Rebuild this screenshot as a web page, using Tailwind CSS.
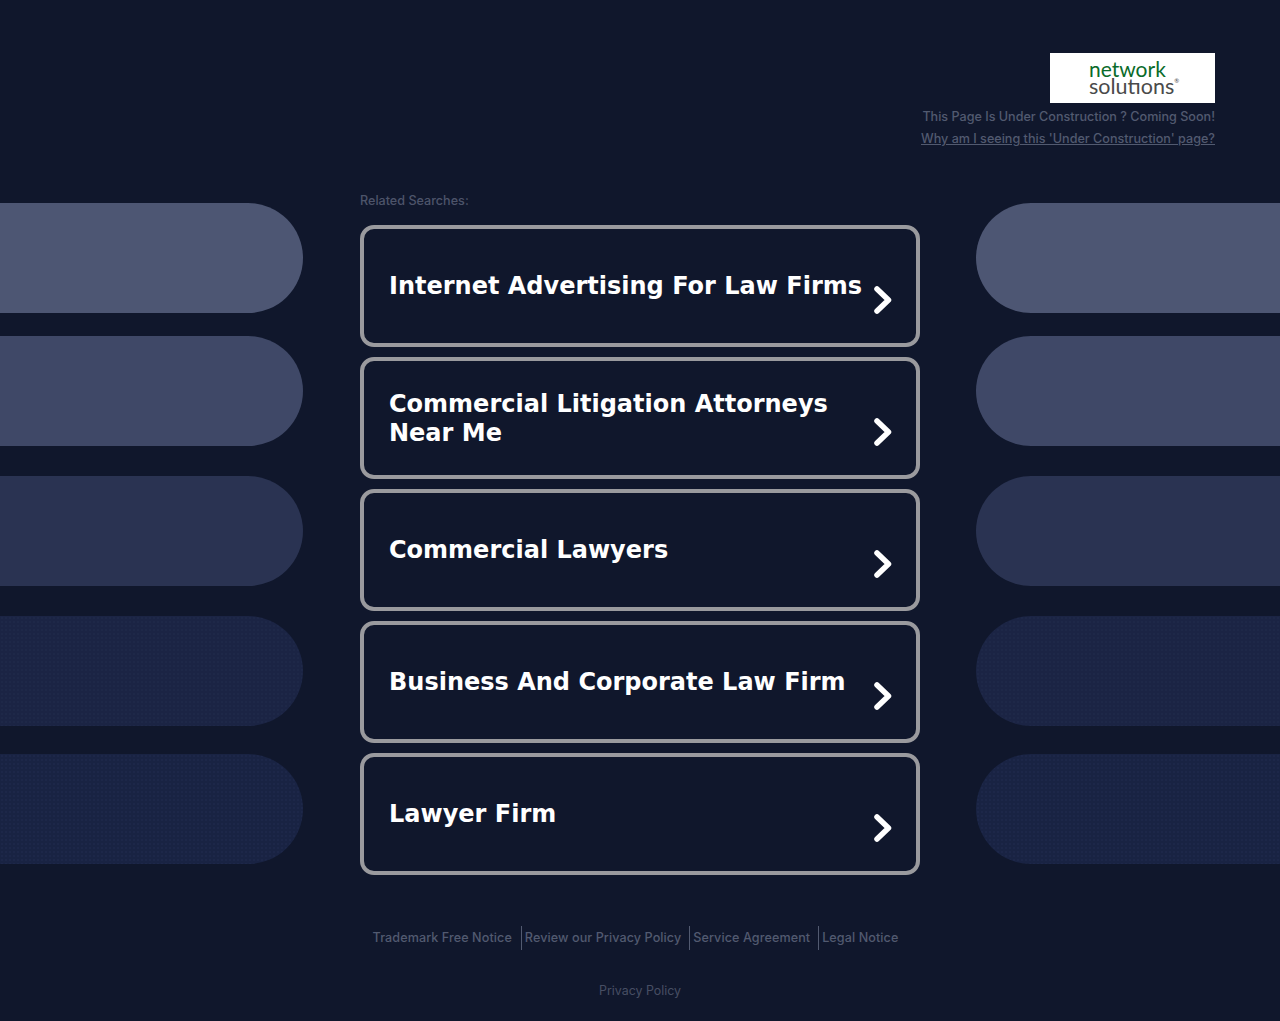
<!DOCTYPE html>
<html lang="en">
<head>
    <meta charset="UTF-8">
    <meta name="viewport" content="width=device-width, initial-scale=1.0">
    <title>Under Construction</title>
    <script src="https://cdn.jsdelivr.net/npm/@tailwindcss/browser@4"></script>
</head>
<body class="bg-[#10172c] h-[1021px] overflow-hidden font-['Inter',sans-serif]">
    <!-- Top right logo -->
    <header class="h-[203px] pt-[53px] pr-[65px] flex flex-col items-end">
        <div class="w-[165px] h-[50px] bg-white flex flex-col items-start pl-[39px] pt-[7px] font-['Lato',sans-serif] text-[21.5px] leading-[17px]">
            <span class="block h-[18px] text-[#0a6b2a] text-[21px]">network</span>
            <span class="block h-[17px] text-[#4a4a4a]">solutıons<span class="text-[6px] leading-none align-top">®</span></span>
        </div>
        <p class="mt-[6px] text-[12.6px] leading-[16px] font-medium text-[#525a70]">This Page Is Under Construction ? Coming Soon!</p>
        <a href="#" class="mt-[6px] text-[12.6px] leading-[16px] font-medium text-[#525a70] underline">Why am I seeing this 'Under Construction' page?</a>
    </header>

    <main class="flex items-start">
        <!-- Left pills -->
        <div class="w-[303px] shrink-0 flex flex-col">
            <div class="h-[110px] rounded-r-[55px] bg-[#4d5673]"></div>
            <div class="h-[110px] mt-[23px] rounded-r-[55px] bg-[#3f4867]"></div>
            <div class="h-[110px] mt-[30px] rounded-r-[55px] bg-[#2a3352]"></div>
            <div class="h-[110px] mt-[30px] rounded-r-[55px] bg-[#1b2444] bg-[radial-gradient(circle,#1e2848_1px,transparent_1px)] bg-[length:4px_4px]"></div>
            <div class="h-[110px] mt-[28px] rounded-r-[55px] bg-[#192343] bg-[radial-gradient(circle,#1d2749_1px,transparent_1px)] bg-[length:4px_4px]"></div>
        </div>

        <!-- Results -->
        <div class="w-[560px] shrink-0 ml-[57px] -mt-[10px]">
            <p class="text-[12.6px] leading-[16px] font-medium text-[#4d546a] mb-[16px]">Related Searches:</p>
            <div class="flex flex-col gap-[10px]">
                <a href="#" class="h-[122px] border-4 border-[#9a9a9e] rounded-[14px] pl-[25px] pr-[23px] flex items-center justify-between">
                    <span class="text-[24px] leading-[29px] font-['DejaVu_Sans',sans-serif] font-bold text-white">Internet Advertising For Law Firms</span>
                    <svg class="w-[20px] h-[30px] shrink-0 mt-[27px]" viewBox="0 0 20 30" fill="none" stroke="white" stroke-width="5.5" stroke-linecap="round" stroke-linejoin="round"><path d="M4 4 L15.5 15 L4 26"/></svg>
                </a>
                <a href="#" class="h-[122px] border-4 border-[#9a9a9e] rounded-[14px] pl-[25px] pr-[23px] flex items-center justify-between">
                    <span class="mt-[2px] text-[24px] leading-[29px] font-['DejaVu_Sans',sans-serif] font-bold text-white">Commercial Litigation Attorneys<br>Near Me</span>
                    <svg class="w-[20px] h-[30px] shrink-0 mt-[27px]" viewBox="0 0 20 30" fill="none" stroke="white" stroke-width="5.5" stroke-linecap="round" stroke-linejoin="round"><path d="M4 4 L15.5 15 L4 26"/></svg>
                </a>
                <a href="#" class="h-[122px] border-4 border-[#9a9a9e] rounded-[14px] pl-[25px] pr-[23px] flex items-center justify-between">
                    <span class="text-[24px] leading-[29px] font-['DejaVu_Sans',sans-serif] font-bold text-white">Commercial Lawyers</span>
                    <svg class="w-[20px] h-[30px] shrink-0 mt-[27px]" viewBox="0 0 20 30" fill="none" stroke="white" stroke-width="5.5" stroke-linecap="round" stroke-linejoin="round"><path d="M4 4 L15.5 15 L4 26"/></svg>
                </a>
                <a href="#" class="h-[122px] border-4 border-[#9a9a9e] rounded-[14px] pl-[25px] pr-[23px] flex items-center justify-between">
                    <span class="text-[24px] leading-[29px] font-['DejaVu_Sans',sans-serif] font-bold text-white">Business And Corporate Law Firm</span>
                    <svg class="w-[20px] h-[30px] shrink-0 mt-[27px]" viewBox="0 0 20 30" fill="none" stroke="white" stroke-width="5.5" stroke-linecap="round" stroke-linejoin="round"><path d="M4 4 L15.5 15 L4 26"/></svg>
                </a>
                <a href="#" class="h-[122px] border-4 border-[#9a9a9e] rounded-[14px] pl-[25px] pr-[23px] flex items-center justify-between">
                    <span class="text-[24px] leading-[29px] font-['DejaVu_Sans',sans-serif] font-bold text-white">Lawyer Firm</span>
                    <svg class="w-[20px] h-[30px] shrink-0 mt-[27px]" viewBox="0 0 20 30" fill="none" stroke="white" stroke-width="5.5" stroke-linecap="round" stroke-linejoin="round"><path d="M4 4 L15.5 15 L4 26"/></svg>
                </a>
            </div>

            <!-- Footer links -->
            <nav class="mt-[51px] flex justify-center text-[12.6px] leading-[24px] font-medium tracking-[0.08px] text-[#525a70] ml-[-9px]">
                <a href="#" class="pr-[9px] border-r border-[#525a70]">Trademark Free Notice</a>
                <a href="#" class="pl-[3px] pr-[8px] border-r border-[#525a70]">Review our Privacy Policy</a>
                <a href="#" class="pl-[3px] pr-[8px] border-r border-[#525a70]">Service Agreement</a>
                <a href="#" class="pl-[3px]">Legal Notice</a>
            </nav>
            <p class="mt-[29px] text-center text-[12.4px] leading-[24px] text-[#474e63]">Privacy Policy</p>
        </div>

        <!-- Right pills -->
        <div class="w-[304px] shrink-0 ml-[56px] flex flex-col">
            <div class="h-[110px] rounded-l-[55px] bg-[#4d5673]"></div>
            <div class="h-[110px] mt-[23px] rounded-l-[55px] bg-[#3f4867]"></div>
            <div class="h-[110px] mt-[30px] rounded-l-[55px] bg-[#2a3352]"></div>
            <div class="h-[110px] mt-[30px] rounded-l-[55px] bg-[#1b2444] bg-[radial-gradient(circle,#1e2848_1px,transparent_1px)] bg-[length:4px_4px]"></div>
            <div class="h-[110px] mt-[28px] rounded-l-[55px] bg-[#192343] bg-[radial-gradient(circle,#1d2749_1px,transparent_1px)] bg-[length:4px_4px]"></div>
        </div>
    </main>
</body>
</html>
